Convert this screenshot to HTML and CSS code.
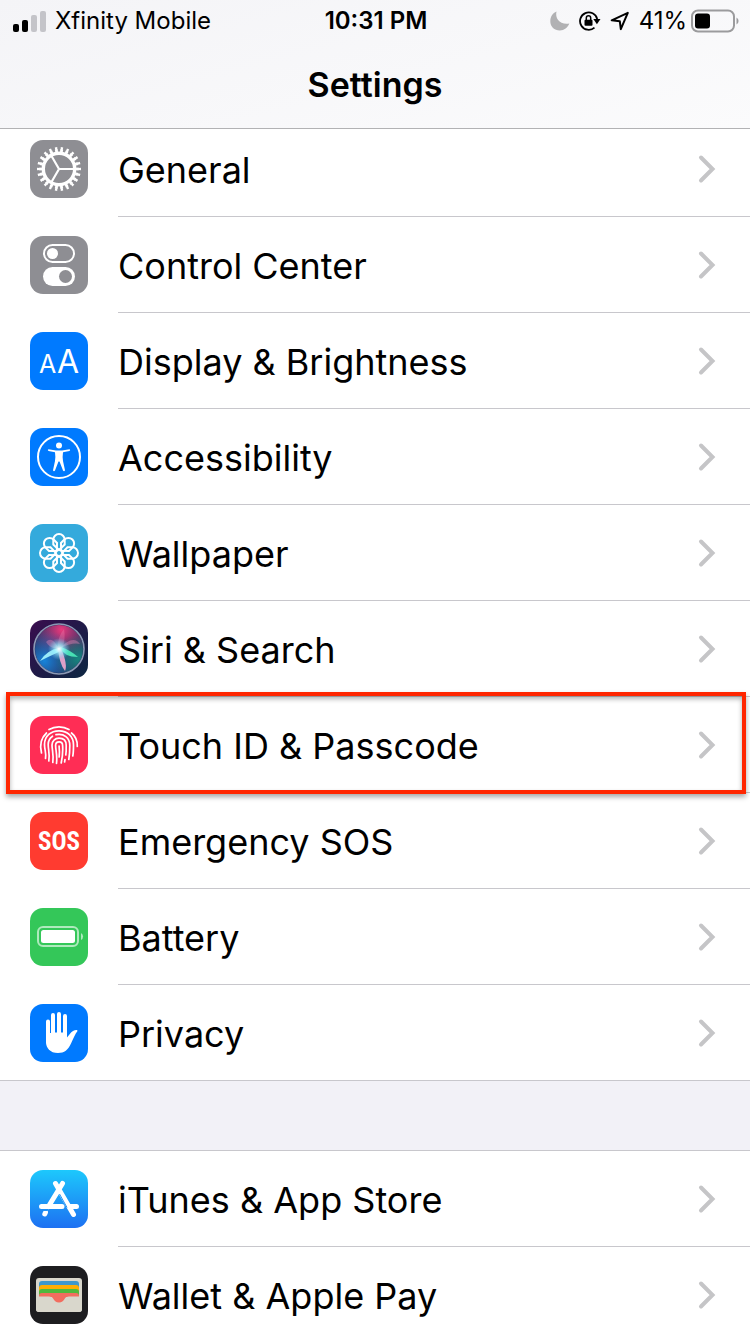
FILE: index.html
```
<!DOCTYPE html>
<html lang="en">
<head>
    <meta charset="UTF-8">
    <meta name="viewport" content="width=device-width, initial-scale=1.0">
    <title>Settings</title>
    <link rel="stylesheet" href="styles.css">
</head>
<body>

<!-- shared shapes -->
<svg class="defs" width="0" height="0" aria-hidden="true">
    <symbol id="chevron" viewBox="0 0 18 30">
        <path d="M3 3.5 14.5 15 3 26.5" fill="none" stroke="#c5c5c7" stroke-width="4" stroke-linecap="round" stroke-linejoin="miter"/>
    </symbol>
    <linearGradient id="storeBg" x1="0" y1="0" x2="0" y2="1">
        <stop offset="0" stop-color="#1dc8fc"/>
        <stop offset="1" stop-color="#1d70f2"/>
    </linearGradient>
    <linearGradient id="siriBg" x1="0" y1="0" x2="1" y2="1">
        <stop offset="0" stop-color="#3a0d4e"/>
        <stop offset=".5" stop-color="#201a48"/>
        <stop offset="1" stop-color="#0c2742"/>
    </linearGradient>
    <radialGradient id="siriPink" cx=".55" cy=".1" r=".65">
        <stop offset="0" stop-color="#e8397c"/>
        <stop offset="1" stop-color="#b0307c" stop-opacity="0"/>
    </radialGradient>
    <radialGradient id="siriBlue" cx=".2" cy=".75" r=".65">
        <stop offset="0" stop-color="#1684da"/>
        <stop offset="1" stop-color="#2468b8" stop-opacity="0"/>
    </radialGradient>
    <radialGradient id="siriGreen" cx=".9" cy=".7" r=".5">
        <stop offset="0" stop-color="#16877f"/>
        <stop offset="1" stop-color="#16877f" stop-opacity="0"/>
    </radialGradient>
    <radialGradient id="siriGlow">
        <stop offset="0" stop-color="#fff"/>
        <stop offset=".4" stop-color="#9ff5ff" stop-opacity=".7"/>
        <stop offset="1" stop-color="#6ad8ff" stop-opacity="0"/>
    </radialGradient>
</svg>

<header class="navbar">
    <div class="status">
        <div class="status-left">
            <svg width="34" height="22" viewBox="0 0 34 22" aria-hidden="true">
                <rect x="0" y="14" width="6" height="8" rx="2"/>
                <rect x="9" y="10" width="6" height="12" rx="2"/>
                <rect x="18" y="5" width="6" height="17" rx="2" fill="#c4c4c9"/>
                <rect x="27" y="1" width="6" height="21" rx="2" fill="#c4c4c9"/>
            </svg>
            <span>Xfinity Mobile</span>
        </div>
        <span class="time">10:31 PM</span>
        <div class="status-right">
            <svg width="20" height="20" viewBox="0 0 20 20" aria-hidden="true">
                <path d="M6.5.5C4.8 7.5 10 14.2 19.3 12.6 17.8 16.8 14.2 19.5 9.8 19.5 4.4 19.5.3 15.5.3 10.2.3 5.8 2.7 2 6.5.5z" fill="#b1b1b3"/>
            </svg>
            <svg width="22" height="20" viewBox="0 0 22 20" aria-hidden="true">
                <path d="M15.5 16.6A8.7 8.7 0 1 1 18.2 8" fill="none" stroke="#000" stroke-width="1.8"/>
                <path d="M14.3 8h7.2l-3.6 5.2z"/>
                <rect x="5.5" y="8.8" width="8" height="6" rx="1"/>
                <path d="M7.3 9V7a2.200 2.200 0 0 1 4.400 0v2" fill="none" stroke="#000" stroke-width="1.5"/>
            </svg>
            <svg width="20" height="20" viewBox="0 0 20 20" aria-hidden="true">
                <path d="M1.7 9.3 17.8 1.8 10.8 18.2 9.8 10.2z" fill="none" stroke="#000" stroke-width="2" stroke-linejoin="round"/>
            </svg>
            <span>41%</span>
            <svg class="level" width="48" height="24" viewBox="0 0 48 24" aria-hidden="true">
                <rect x="1" y="1.5" width="42" height="21" rx="6" fill="none" stroke="#9b9b9d" stroke-width="2"/>
                <rect x="4" y="4.5" width="15" height="15" rx="3"/>
                <path d="M45.5 8.5a4 4 0 0 1 0 7z" fill="#9b9b9d"/>
            </svg>
        </div>
    </div>
    <h1>Settings</h1>
</header>

<main>
    <ul class="group">
        <li><a class="row" href="#general">
            <svg class="icon gray" viewBox="0 0 58 58" aria-hidden="true">
                <g fill="none" stroke="#fff">
                    <circle cx="29" cy="29" r="15.7" stroke-width="3.4"/>
                    <circle cx="29" cy="29" r="18.2" stroke-width="3" pathLength="44" stroke-dasharray="1.1 .9" stroke-dashoffset=".55"/>
                    <circle cx="29" cy="29" r="20.5" stroke-width="3" pathLength="44" stroke-dasharray=".8 1.2" stroke-dashoffset=".4"/>
                    <path d="M29 29H44M29 29 21.5 16M29 29 21.5 42" stroke-width="2.2"/>
                </g>
            </svg>
            <span class="label">General</span>
            <svg class="chevron" aria-hidden="true"><use href="#chevron"/></svg>
        </a></li>
        <li><a class="row" href="#control-center">
            <svg class="icon gray" viewBox="0 0 58 58" aria-hidden="true">
                <rect x="14" y="9" width="30" height="17" rx="8.5" fill="none" stroke="#fff" stroke-width="2"/>
                <circle cx="22.5" cy="17.5" r="5.5" fill="#fff"/>
                <rect x="13" y="31" width="32" height="19" rx="9.5" fill="#fff"/>
                <circle cx="35.5" cy="40.5" r="6.5" fill="#8e8e93"/>
            </svg>
            <span class="label">Control Center</span>
            <svg class="chevron" aria-hidden="true"><use href="#chevron"/></svg>
        </a></li>
        <li><a class="row" href="#display">
            <svg class="icon blue" viewBox="0 0 58 58" aria-hidden="true">
                <text class="aa" x="9" y="41" font-size="25">A</text>
                <text class="aa" x="27" y="41" font-size="32">A</text>
            </svg>
            <span class="label">Display &amp; Brightness</span>
            <svg class="chevron" aria-hidden="true"><use href="#chevron"/></svg>
        </a></li>
        <li><a class="row" href="#accessibility">
            <svg class="icon blue" viewBox="0 0 58 58" aria-hidden="true">
                <circle cx="29" cy="29" r="21" fill="none" stroke="#fff" stroke-width="2"/>
                <circle cx="29" cy="17.5" r="3" fill="#fff"/>
                <path d="M18.5 21.2 26 22.4H32L39.5 21.2Q41 21.8 39.5 23.1L33 24.3Q32.3 29 33 33L35 42.2Q34.2 43.9 33 42.5L29.5 33.5H28.5L25 42.5Q23.8 43.9 23 42.2L25 33Q25.7 29 25 24.3L18.5 23.1Q17 21.8 18.5 21.2z" fill="#fff"/>
            </svg>
            <span class="label">Accessibility</span>
            <svg class="chevron" aria-hidden="true"><use href="#chevron"/></svg>
        </a></li>
        <li><a class="row" href="#wallpaper">
            <svg class="icon sky" viewBox="0 0 58 58" aria-hidden="true">
                <defs>
                    <path id="petal" d="M29 26 23.300 20.500V15.700a5.700 5.700 0 0 1 11.400 0V20.500z"/>
                </defs>
                <g fill="none" stroke="#fff" stroke-width="2">
                    <circle cx="29" cy="29" r="3.5"/>
                    <use href="#petal"/>
                    <use href="#petal" transform="rotate(45 29 29)"/>
                    <use href="#petal" transform="rotate(90 29 29)"/>
                    <use href="#petal" transform="rotate(135 29 29)"/>
                    <use href="#petal" transform="rotate(180 29 29)"/>
                    <use href="#petal" transform="rotate(225 29 29)"/>
                    <use href="#petal" transform="rotate(270 29 29)"/>
                    <use href="#petal" transform="rotate(315 29 29)"/>
                </g>
            </svg>
            <span class="label">Wallpaper</span>
            <svg class="chevron" aria-hidden="true"><use href="#chevron"/></svg>
        </a></li>
        <li><a class="row" href="#siri">
            <svg class="icon" viewBox="0 0 58 58" aria-hidden="true">
                <rect width="58" height="58" fill="url(#siriBg)"/>
                <circle cx="29" cy="29" r="24" fill="#28305e"/>
                <circle cx="29" cy="29" r="24" fill="url(#siriPink)"/>
                <circle cx="29" cy="29" r="24" fill="url(#siriBlue)"/>
                <circle cx="29" cy="29" r="24" fill="url(#siriGreen)"/>
                <path d="M29 29Q22 15 16 22 20 29 29 29zM29 29Q43 14 50 24 42 22 29 29z" fill="#e889ba" opacity=".4"/>
                <path d="M29 28Q17 30 10 41 22 35 31 31z" fill="#a8f8ff" opacity=".9"/>
                <path d="M28 28Q29 43 35 51 38 45 31 28z" fill="#f3a7cf" opacity=".9"/>
                <path d="M29 27Q34 37 48 37 40 30 31 27z" fill="#4df5bd" opacity=".85"/>
                <path d="M28 29Q27 17 34 9 36 19 32 29z" fill="#ff9dc8" opacity=".25"/>
                <circle cx="29" cy="29" r="11" fill="url(#siriGlow)"/>
                <circle cx="29" cy="29" r="25" fill="none" stroke="#8b99b5" stroke-width="1.6"/>
            </svg>
            <span class="label">Siri &amp; Search</span>
            <svg class="chevron" aria-hidden="true"><use href="#chevron"/></svg>
        </a></li>
        <li class="highlight"><a class="row" href="#touch-id">
            <svg class="icon pink" viewBox="0 0 58 58" aria-hidden="true">
                <g fill="none" stroke="#fff" stroke-width="1.7" stroke-linecap="round">
                    <path d="M19 13.5C25 10 33 10 39 13.5"/>
                    <path d="M11.500 37C9.500 29 11 22 16.500 17M41.500 17C46 20.500 47.500 25.500 47.300 30.500"/>
                    <path d="M15.500 42.500C16.500 37 14.500 34 14.500 28.500 14.500 20 21 14.800 29 14.800 37.500 14.800 43.500 20.500 43.500 29 43.500 33 43.500 36.500 42.800 40"/>
                    <path d="M18.800 45C20 38 18.200 34 18.200 28.500 18.200 25 19.800 22 22.500 20.200M26 18.700C34 17 39.800 22 39.800 29.500 39.800 35 39.500 39 38.800 43.500"/>
                    <path d="M22.800 46.500C24 39 22 34 22 29 22 25 25 22.200 29 22.200 33.500 22.200 36.200 25 36.200 29.500 36.300 34 36.300 36 35.800 39M35 43.500 34.600 46"/>
                    <path d="M26.500 47.500C27.500 39 25.600 34 25.600 29.500 25.600 24.700 32.600 24.700 32.600 29.500 33 35 32.500 41 31.200 47"/>
                    <path d="M29.100 30C29.600 35 29.500 38 29.200 41"/>
                </g>
            </svg>
            <span class="label">Touch ID &amp; Passcode</span>
            <svg class="chevron" aria-hidden="true"><use href="#chevron"/></svg>
        </a></li>
        <li><a class="row" href="#sos">
            <span class="icon red sos" aria-hidden="true">SOS</span>
            <span class="label">Emergency SOS</span>
            <svg class="chevron" aria-hidden="true"><use href="#chevron"/></svg>
        </a></li>
        <li><a class="row" href="#battery">
            <svg class="icon green" viewBox="0 0 58 58" aria-hidden="true">
                <rect x="8" y="19" width="40" height="19" rx="5" fill="none" stroke="#aeeabd" stroke-width="2"/>
                <rect x="11" y="22" width="34" height="13" rx="2.5" fill="#fff"/>
                <path d="M51 25a4 4 0 0 1 0 7z" fill="#aeeabd"/>
            </svg>
            <span class="label">Battery</span>
            <svg class="chevron" aria-hidden="true"><use href="#chevron"/></svg>
        </a></li>
        <li><a class="row" href="#privacy">
            <svg class="icon blue" viewBox="0 0 58 58" aria-hidden="true">
                <path d="M18 17.5V38M23 11V32M29 10V32M35 12V34" fill="none" stroke="#fff" stroke-width="4" stroke-linecap="round"/>
                <path d="M16 28H37V33.5C39 31 40.5 28.5 43 27 45 26 47.5 25.5 47.5 27 45 30 43.5 34.5 41 39.5 38 46 34.5 49 28 49 20 49 16 44 16 38z" fill="#fff"/>
                <path d="M20.5 16V29M26 12V29M32 12V29" stroke="#007aff" stroke-width="1"/>
            </svg>
            <span class="label">Privacy</span>
            <svg class="chevron" aria-hidden="true"><use href="#chevron"/></svg>
        </a></li>
    </ul>

    <ul class="group">
        <li><a class="row" href="#app-store">
            <svg class="icon" viewBox="0 0 58 58" aria-hidden="true">
                <rect width="58" height="58" fill="url(#storeBg)"/>
                <path d="M32.5 13.5 18.5 36.5M15.5 42.5 14.8 44M25.5 13.5 43.5 44.5M11.5 36.5H32M41 36.5H46.5" fill="none" stroke="#fff" stroke-width="5" stroke-linecap="round"/>
                <path d="M29.5 24 37 37.5M17.5 40.5H13" fill="none" stroke="#1e91f7" stroke-width="1"/>
            </svg>
            <span class="label">iTunes &amp; App Store</span>
            <svg class="chevron" aria-hidden="true"><use href="#chevron"/></svg>
        </a></li>
        <li><a class="row" href="#wallet">
            <svg class="icon black" viewBox="0 0 58 58" aria-hidden="true">
                <rect x="6" y="12" width="46" height="34" rx="3" fill="#d9d7cc"/>
                <path d="M9 31V18q0-3 3-3H46q3 0 3 3V31z" fill="#3e98cd"/>
                <path d="M9 31V22q0-3 3-3H46q3 0 3 3V31z" fill="#ffae03"/>
                <path d="M9 31V26q0-3 3-3H46q3 0 3 3V31z" fill="#4fb93e"/>
                <path d="M9 31V30q0-3 3-3H46q3 0 3 3V31z" fill="#f26d5f"/>
                <path d="M6 30.5H19C24 30.5 23 36.5 29 36.5S34 30.5 39 30.5H52V43q0 3-3 3H9q-3 0-3-3z" fill="#d9d7cc"/>
                <path d="M19 30C24 30 23 36.5 29 36.5S34 30 39 30z" fill="#f26d5f"/>
            </svg>
            <span class="label">Wallet &amp; Apple Pay</span>
            <svg class="chevron" aria-hidden="true"><use href="#chevron"/></svg>
        </a></li>
    </ul>
</main>

</body>
</html>
```
FILE: styles.css
```
* {
    box-sizing: border-box;
}
body {
    display: flex;
    flex-direction: column;
    height: 100vh;
    margin: 0;
    background-color: #f2f1f7;
    color: #000;
    font-family: Inter, "Liberation Sans", sans-serif;
}
.defs {
    position: absolute;
}
.navbar {
    flex: none;
    height: 129px;
    background: linear-gradient(165deg, #f4f4f7, #fbfbfc);
    border-bottom: 1px solid #b2b2b4;
}
.status {
    display: grid;
    grid-template-columns: 1fr auto 1fr;
    align-items: center;
    height: 41px;
    padding: 0 11px 0 13px;
    font-size: 24px;
}
.status-left,
.status-right {
    display: flex;
    align-items: center;
}
.status-left {
    gap: 8px;
}
.status-right {
    justify-content: flex-end;
    gap: 9px;
}
.status-right .level {
    margin-left: -5px;
}
.time {
    font-weight: 600;
}
h1 {
    margin: 0;
    font-size: 34px;
    font-weight: 600;
    line-height: 88px;
    text-align: center;
}
main {
    flex: 1;
    min-height: 0;
    overflow: hidden;
}
.group {
    margin: 0;
    padding: 0;
    list-style: none;
    background-color: #fff;
}
/* list is scrolled a little under the bar */
.group:first-child {
    margin-top: -8px;
}
.group + .group {
    margin-top: 69px;
    border-top: 1px solid #c8c7cc;
}
.row {
    display: flex;
    align-items: center;
    height: 96px;
    padding-left: 30px;
    color: inherit;
    text-decoration: none;
    background: linear-gradient(#c8c7cc, #c8c7cc) 118px 100% / 100% 1px no-repeat;
}
.group li:last-child .row {
    background-position: 0 100%;
}
.group:last-child li:last-child .row {
    background: none;
}
.icon {
    flex: none;
    width: 58px;
    height: 58px;
    margin-right: 30px;
    border-radius: 13px;
}
.label {
    flex: 1;
    padding-top: 2px;
    font-size: 36px;
    line-height: 48px;
}
.chevron {
    width: 18px;
    height: 30px;
    margin-right: 34px;
}
.gray { background-color: #8e8e93; }
.blue { background-color: #007aff; }
.sky { background-color: #34aadc; }
.pink { background-color: #ff2d55; }
.red { background-color: #ff3b30; }
.green { background-color: #34c759; }
.black { background-color: #1d1d20; }
.aa {
    fill: #fff;
    font-family: Inter, sans-serif;
}
.sos {
    display: flex;
    align-items: center;
    justify-content: center;
    color: #fff;
    font-family: "Liberation Sans Narrow", "Roboto Condensed", "Open Sans Condensed", Roboto, sans-serif;
    font-size: 25px;
    font-weight: 700;
}
.highlight {
    position: relative;
}
.highlight::after {
    content: "";
    position: absolute;
    inset: -5px 4px -1px 6px;
    border: 4px solid #ff2600;
    box-shadow: 0 3px 5px rgba(0, 0, 0, 0.35), inset 0 3px 5px rgba(0, 0, 0, 0.3);
    pointer-events: none;
}
```
